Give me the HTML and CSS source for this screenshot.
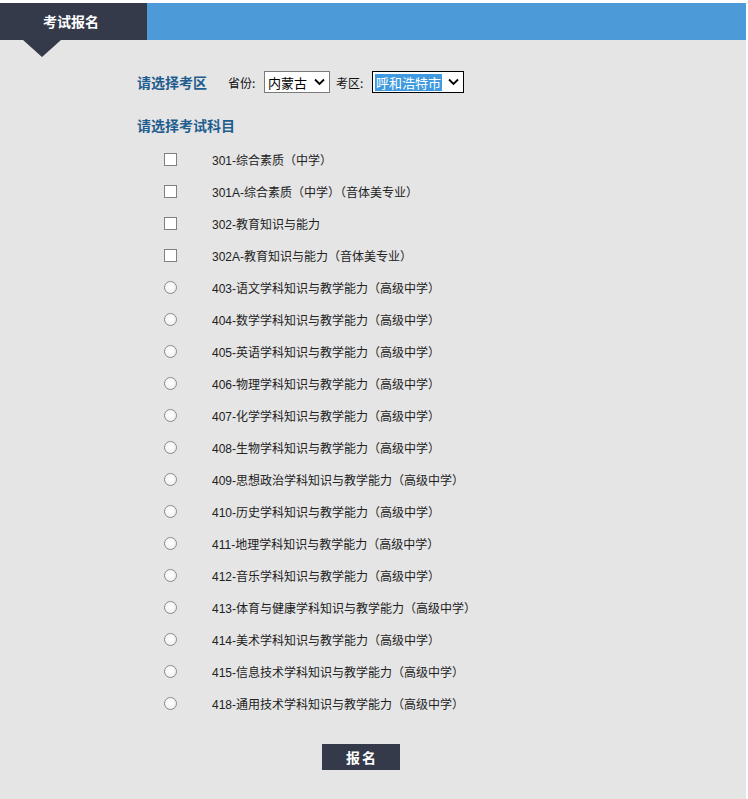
FILE: index.html
```html
<!DOCTYPE html>
<html lang="zh-CN">
<head>
<meta charset="utf-8">
<title>考试报名</title>
<link rel="stylesheet" href="styles.css">
</head>
<body>
<div class="page">
  <div class="header">
    <div class="tab">考试报名</div>
    <div class="bar"></div>
  </div>
  <div class="content">
    <div class="region-row">
      <span class="section-title">请选择考区</span>
      <span class="label label-first">省份:</span>
      <span class="select select-province">
        <span class="select-text">内蒙古</span>
        <svg class="chev" width="11" height="8" viewBox="0 0 11 8"><path d="M1 1.5 L5.5 6 L10 1.5" fill="none" stroke="#000" stroke-width="1.8"/></svg>
      </span>
      <span class="label">考区:</span>
      <span class="select select-area">
        <span class="select-text selected">呼和浩特市</span>
        <svg class="chev" width="11" height="8" viewBox="0 0 11 8"><path d="M1 1.5 L5.5 6 L10 1.5" fill="none" stroke="#000" stroke-width="1.8"/></svg>
      </span>
    </div>
    <div class="section-title subject-title">请选择考试科目</div>
    <ul class="items">
      <li class="item"><span class="box check"></span><span class="text">301-综合素质（中学）</span></li>
      <li class="item"><span class="box check"></span><span class="text">301A-综合素质（中学）（音体美专业）</span></li>
      <li class="item"><span class="box check"></span><span class="text">302-教育知识与能力</span></li>
      <li class="item"><span class="box check"></span><span class="text">302A-教育知识与能力（音体美专业）</span></li>
      <li class="item"><span class="box radio"></span><span class="text">403-语文学科知识与教学能力（高级中学）</span></li>
      <li class="item"><span class="box radio"></span><span class="text">404-数学学科知识与教学能力（高级中学）</span></li>
      <li class="item"><span class="box radio"></span><span class="text">405-英语学科知识与教学能力（高级中学）</span></li>
      <li class="item"><span class="box radio"></span><span class="text">406-物理学科知识与教学能力（高级中学）</span></li>
      <li class="item"><span class="box radio"></span><span class="text">407-化学学科知识与教学能力（高级中学）</span></li>
      <li class="item"><span class="box radio"></span><span class="text">408-生物学科知识与教学能力（高级中学）</span></li>
      <li class="item"><span class="box radio"></span><span class="text">409-思想政治学科知识与教学能力（高级中学）</span></li>
      <li class="item"><span class="box radio"></span><span class="text">410-历史学科知识与教学能力（高级中学）</span></li>
      <li class="item"><span class="box radio"></span><span class="text">411-地理学科知识与教学能力（高级中学）</span></li>
      <li class="item"><span class="box radio"></span><span class="text">412-音乐学科知识与教学能力（高级中学）</span></li>
      <li class="item"><span class="box radio"></span><span class="text">413-体育与健康学科知识与教学能力（高级中学）</span></li>
      <li class="item"><span class="box radio"></span><span class="text">414-美术学科知识与教学能力（高级中学）</span></li>
      <li class="item"><span class="box radio"></span><span class="text">415-信息技术学科知识与教学能力（高级中学）</span></li>
      <li class="item"><span class="box radio"></span><span class="text">418-通用技术学科知识与教学能力（高级中学）</span></li>
    </ul>
    <div class="btn-row"><span class="btn">报名</span></div>
  </div>
</div>
</body>
</html>
```

FILE: styles.css
```css
html, body {
  margin: 0;
  padding: 0;
  background: #ffffff;
}
body {
  font-family: "Liberation Sans", "Noto Sans CJK SC", sans-serif;
  color: #222;
}
.page {
  margin-top: 3px;
  margin-right: 2px;
  background: #e5e5e5;
  height: 796px;
  overflow: hidden;
}
.header {
  display: flex;
  height: 37px;
  position: relative;
}
.tab {
  width: 147px;
  background: #343a4a;
  color: #fff;
  font-family: "Noto Sans CJK SC", sans-serif;
  font-weight: bold;
  font-size: 14px;
  line-height: 36px;
  padding-left: 43px;
  box-sizing: border-box;
  position: relative;
}
.tab::after {
  content: "";
  position: absolute;
  left: 23px;
  top: 37px;
  width: 0;
  height: 0;
  border-left: 19px solid transparent;
  border-right: 19px solid transparent;
  border-top: 17px solid #343a4a;
}
.bar {
  flex: 1;
  background: #4c9ad8;
}
.content {
  padding-left: 137px;
  padding-top: 31px;
}
.region-row {
  display: flex;
  align-items: center;
  height: 22px;
}
.section-title {
  font-family: "Noto Sans CJK SC", sans-serif;
  font-weight: bold;
  font-size: 14px;
  color: #1f5d8f;
  line-height: 20px;
}
.label {
  font-family: "Noto Sans CJK SC", sans-serif;
  font-size: 12px;
  color: #111;
  width: 36px;
  margin-left: 6px;
}
.label-first {
  margin-left: 21px;
  width: 36px;
}
.select {
  display: flex;
  align-items: center;
  height: 22px;
  box-sizing: border-box;
  background: #fff;
  border: 1px solid #7a7a7a;
  padding: 0 4px 0 2px;
}
.select-province {
  width: 66px;
}
.select-area {
  width: 92px;
  border-color: #000;
}
.select-text {
  font-family: "Noto Sans CJK SC", sans-serif;
  font-size: 13px;
  line-height: 17px;
  padding: 0 1px;
  color: #000;
  white-space: nowrap;
}
.select-text.selected {
  background: #3f9ae0;
  color: #fff;
}
.chev {
  margin-left: auto;
}
.subject-title {
  margin-top: 22px;
}
.items {
  list-style: none;
  margin: 8px 0 0 0;
  padding: 0;
}
.item {
  display: flex;
  align-items: center;
  height: 32px;
}
.box {
  width: 13px;
  height: 13px;
  box-sizing: border-box;
  margin-left: 27px;
  margin-right: 35px;
  background: #fff;
  flex: none;
}
.check {
  border: 1px solid #808080;
}
.radio {
  border: 1px solid #8a8a8a;
  border-radius: 50%;
  background: radial-gradient(circle at 50% 40%, #ffffff 0%, #f4f4f4 60%, #e2e2e2 100%);
}
.text {
  font-size: 12px;
  color: #222;
  white-space: nowrap;
}
.btn-row {
  margin-top: 25px;
  padding-left: 185px;
}
.btn {
  display: inline-block;
  width: 78px;
  height: 26px;
  line-height: 26px;
  background: #343a4a;
  color: #fff;
  text-align: center;
  font-family: "Noto Sans CJK SC", sans-serif;
  font-weight: bold;
  font-size: 14px;
  letter-spacing: 2px;
  text-indent: 2px;
}
```
